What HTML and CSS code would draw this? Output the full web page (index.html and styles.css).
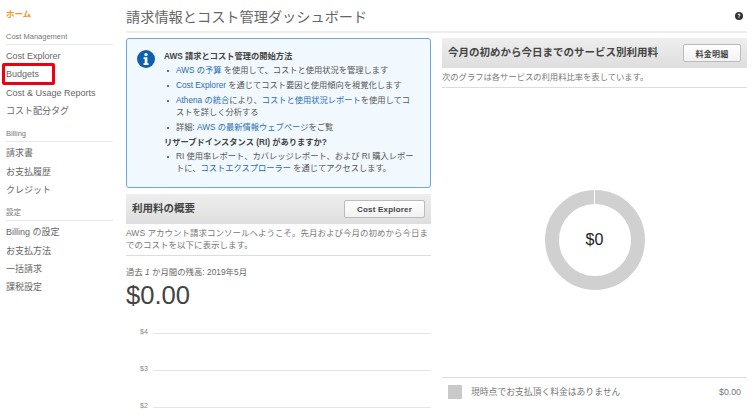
FILE: index.html
```html
<!DOCTYPE html>
<html lang="ja">
<head>
    <meta charset="UTF-8">
    <title>請求情報とコスト管理ダッシュボード</title>
    <link rel="stylesheet" href="styles.css">
</head>
<body>
    <nav class="side-nav">
        <a class="nav-home" href="#">ホーム</a>
        <div class="nav-group">Cost Management</div>
        <a class="nav-item" href="#">Cost Explorer</a>
        <a class="nav-item nav-marked" href="#">Budgets</a>
        <a class="nav-item" href="#">Cost &amp; Usage Reports</a>
        <a class="nav-item" href="#">コスト配分タグ</a>
        <div class="nav-group">Billing</div>
        <a class="nav-item" href="#">請求書</a>
        <a class="nav-item" href="#">お支払履歴</a>
        <a class="nav-item" href="#">クレジット</a>
        <div class="nav-group">設定</div>
        <a class="nav-item" href="#">Billing の設定</a>
        <a class="nav-item" href="#">お支払方法</a>
        <a class="nav-item" href="#">一括請求</a>
        <a class="nav-item" href="#">課税設定</a>
    </nav>

    <main class="content">
        <header class="page-head">
            <h1>請求情報とコスト管理ダッシュボード</h1>
            <svg class="help-icon" viewBox="0 0 16 16" aria-label="ヘルプ">
                <circle cx="8" cy="8" r="8" fill="#333"/>
                <path d="M5.3 6.2C5.4 4.6 6.5 3.7 8.1 3.7c1.6 0 2.7.9 2.7 2.2 0 1-.5 1.5-1.3 2-.6.4-.8.6-.8 1.2v.3H7.1V9c0-1 .3-1.5 1.1-2 .6-.4.8-.6.8-1 0-.5-.4-.8-.9-.8-.6 0-1 .4-1 1z" fill="#fff"/>
                <rect x="7.1" y="10.4" width="1.8" height="1.8" fill="#fff"/>
            </svg>
        </header>

        <div class="columns">
            <section class="left-col">
                <div class="info-box">
                    <svg class="info-icon" viewBox="0 0 18 18">
                        <circle cx="9" cy="9" r="9" fill="#0f5fae"/>
                        <circle cx="9" cy="4.6" r="1.7" fill="#fff"/>
                        <path d="M6.6 7.3h3.8v6h1.2v1.6H6.5v-1.6h1.2V8.9H6.6z" fill="#fff"/>
                    </svg>
                    <div class="info-text">
                        <h3>AWS 請求とコスト管理の開始方法</h3>
                        <ul>
                            <li><a href="#">AWS の予算</a> を使用して、コストと使用状況を管理します</li>
                            <li><a href="#">Cost Explorer</a> を通じてコスト要因と使用傾向を視覚化します</li>
                            <li><a href="#">Athena の統合</a>により、<a href="#">コストと使用状況レポート</a>を使用してコストを詳しく分析する</li>
                            <li>詳細: <a href="#">AWS の最新情報ウェブページ</a>をご覧</li>
                        </ul>
                        <h3>リザーブドインスタンス (RI) がありますか?</h3>
                        <ul>
                            <li>RI 使用率レポート、カバレッジレポート、および RI 購入レポートに、<a href="#">コストエクスプローラー</a> を通じてアクセスします。</li>
                        </ul>
                    </div>
                </div>

                <div class="panel-head">
                    <h2>利用料の概要</h2>
                    <button class="btn btn-wide">Cost Explorer</button>
                </div>
                <p class="panel-note">AWS アカウント請求コンソールへようこそ。先月および今月の初めから今日までのコストを以下に表示します。</p>
                <div class="balance-label">過去 <i>1</i> か月間の残高: 2019年5月</div>
                <div class="balance">$0.00</div>
                <div class="chart">
                    <div class="chart-row"><span>$4</span><b></b></div>
                    <div class="chart-row"><span>$3</span><b></b></div>
                    <div class="chart-row"><span>$2</span><b></b></div>
                </div>
            </section>

            <section class="right-col">
                <div class="panel-head">
                    <h2>今月の初めから今日までのサービス別利用料</h2>
                    <button class="btn">料金明細</button>
                </div>
                <p class="panel-note one-line">次のグラフは各サービスの利用料比率を表しています。</p>
                <div class="donut-wrap">
                    <div class="donut">$0</div>
                </div>
                <div class="legend">
                    <span class="swatch"></span>
                    <span class="legend-name">現時点でお支払頂く料金はありません</span>
                    <span class="legend-cost">$0.00</span>
                </div>
            </section>
        </div>
    </main>
</body>
</html>
```

FILE: styles.css
```css
* {
    box-sizing: border-box;
    margin: 0;
    padding: 0;
}

html, body {
    height: 417px;
    overflow: hidden;
}

body {
    display: flex;
    background-color: #fff;
    color: #555;
    font-family: "Liberation Sans", "Noto Sans CJK JP", sans-serif;
}

a {
    color: #2a6db5;
    text-decoration: none;
}

/* left nav */
.side-nav {
    width: 126px;
    flex: none;
    padding: 8px 13px 0 6px;
    display: flex;
    flex-direction: column;
}

.nav-home {
    color: #f7931e;
    font-size: 8.5px;
    font-weight: bold;
    line-height: 12px;
}

.nav-group {
    margin-top: 8px;
    height: 14px;
    line-height: 12px;
    font-size: 7.5px;
    color: #777;
    border-bottom: 1px solid #e8e8e8;
}

.nav-home + .nav-group {
    margin-top: 11px;
}

.nav-item {
    color: #666;
    font-size: 9px;
    line-height: 18.33px;
}

.nav-group + .nav-item {
    margin-top: 2px;
}

.nav-marked {
    position: relative;
}

.nav-marked::after {
    content: "";
    position: absolute;
    left: -4px;
    top: -2px;
    width: 53px;
    height: 22px;
    box-sizing: border-box;
    border: 3px solid #ee0012;
    border-radius: 2px;
}

/* main */
.content {
    width: 621px;
    flex: none;
}

.page-head {
    height: 33px;
    display: flex;
    align-items: center;
    justify-content: space-between;
    border-bottom: 2px solid #eee;
    padding: 0 4px 0 0;
}

.page-head h1 {
    font-size: 14.2px;
    font-weight: normal;
    color: #666;
}

.help-icon {
    width: 8px;
    height: 8px;
}

.columns {
    display: flex;
    gap: 11px;
    padding-top: 5px;
}

.left-col, .right-col {
    width: 305px;
    flex: none;
}

.info-box {
    height: 150px;
    display: flex;
    gap: 9px;
    padding: 12px 12px 0 10px;
    background-color: #f1f8fe;
    border: 1px solid #6fa7dc;
    border-radius: 3px;
}

.info-icon {
    width: 18px;
    height: 18px;
    flex: none;
    margin-top: -1px;
}

.info-text h3 {
    font-size: 8.25px;
    line-height: 12px;
    color: #444;
}

.info-text h3 + ul {
    margin-top: 2px;
}

.info-text ul {
    list-style: none;
    font-size: 8.25px;
    line-height: 12px;
    color: #555;
}

.info-text li {
    position: relative;
    padding-left: 12px;
    margin-bottom: 3px;
}

.info-text li::before {
    content: "";
    position: absolute;
    left: 3px;
    top: 5px;
    width: 2px;
    height: 2px;
    border-radius: 50%;
    background-color: #444;
}

.panel-head {
    height: 30px;
    display: flex;
    align-items: center;
    justify-content: space-between;
    padding: 0 6px;
    background: linear-gradient(#eeeeee, #dedede);
}

.left-col .panel-head {
    margin-top: 6px;
}

.panel-head h2 {
    font-size: 10.5px;
    line-height: 14px;
    margin-top: -2px;
    color: #444;
}

.btn {
    width: 58px;
    height: 18px;
    font-family: inherit;
    font-size: 8px;
    font-weight: bold;
    letter-spacing: 0.2px;
    color: #444;
    background: linear-gradient(#fff, #f2f2f2);
    border: 1px solid #bbb;
    border-radius: 2px;
}

.btn-wide {
    width: 81px;
}

.panel-note {
    height: 32px;
    padding-top: 3px;
    font-size: 8.5px;
    line-height: 12px;
    color: #777;
    border-bottom: 1px solid #ddd;
}

.panel-note.one-line {
    height: 20px;
    font-size: 8.3px;
}

.balance-label {
    margin-top: 10px;
    font-size: 8.4px;
    line-height: 12px;
    color: #666;
}

.balance {
    margin-top: 2px;
    font-size: 25.6px;
    line-height: 30px;
    color: #444;
}

.chart {
    margin-top: 12px;
    display: flex;
    flex-direction: column;
    gap: 25px;
}

.chart-row {
    height: 12px;
    display: flex;
    align-items: flex-end;
}

.chart-row span {
    width: 27px;
    padding-left: 14px;
    margin-bottom: -4px;
    font-size: 7px;
    line-height: 12px;
    color: #888;
}

.chart-row b {
    flex: 1;
    height: 1px;
    background-color: #e4e4e4;
}

.donut-wrap {
    height: 289px;
    padding-top: 14px;
    display: flex;
    align-items: center;
    justify-content: center;
}

.donut {
    position: relative;
    width: 100px;
    height: 100px;
    display: flex;
    align-items: center;
    justify-content: center;
    border: 14px solid #d0d0d0;
    border-radius: 50%;
    font-size: 16px;
    color: #222;
}

/* thin gap where the ring starts */
.donut::before {
    content: "";
    position: absolute;
    left: 35.5px;
    top: -14px;
    width: 1px;
    height: 15px;
    background-color: #fff;
}

.legend {
    height: 28px;
    display: flex;
    align-items: center;
    padding: 0 6px;
    border-top: 1px solid #ddd;
    font-size: 8.8px;
    color: #777;
}

.swatch {
    width: 14px;
    height: 14px;
    margin-right: 9px;
    background-color: #c9c9c9;
}

.legend-name {
    flex: 1;
}
```
